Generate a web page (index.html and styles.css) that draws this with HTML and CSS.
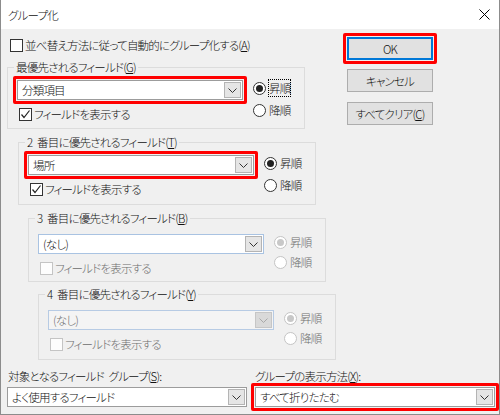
FILE: index.html
```html
<!DOCTYPE html>
<html lang="ja">
<head>
<meta charset="utf-8">
<title>グループ化</title>
<link rel="stylesheet" href="styles.css">
</head>
<body>
<div class="dialog">
  <div class="titlebar">
    <span class="title">グループ化</span>
    <svg class="close" width="11" height="11" viewBox="0 0 11 11"><path d="M0.5 0.5 L10.5 10.5 M10.5 0.5 L0.5 10.5" stroke="#000" stroke-width="1" fill="none"/></svg>
  </div>
  <div class="main">
    <div class="left">
      <div class="check auto"><span class="box"></span><span>並べ替え方法に従って自動的にグループ化する(<u>A</u>)</span></div>

      <fieldset class="group g1">
        <legend>最優先されるフィールド(<u>G</u>)</legend>
        <div class="fbody">
          <div class="hl red"><div class="combo"><span class="val">分類項目</span><span class="btn"><svg width="9" height="5" viewBox="0 0 9 5"><path d="M0.5 0.5 L4.5 4.5 L8.5 0.5" stroke="#333" fill="none"/></svg></span></div></div>
          <div class="radios">
            <div class="radio"><span class="circle on"></span><span class="focus">昇順</span></div>
            <div class="radio"><span class="circle"></span><span>降順</span></div>
          </div>
          <div class="check sub"><span class="box"><svg width="11" height="11" viewBox="0 0 11 11"><path d="M1.5 5.5 L4 8.5 L9.5 1.5" stroke="#222" stroke-width="1.2" fill="none"/></svg></span><span>フィールドを表示する</span></div>
        </div>
      </fieldset>

      <fieldset class="group g2">
        <legend>2 番目に優先されるフィールド(<u>T</u>)</legend>
        <div class="fbody">
          <div class="hl red"><div class="combo"><span class="val">場所</span><span class="btn"><svg width="9" height="5" viewBox="0 0 9 5"><path d="M0.5 0.5 L4.5 4.5 L8.5 0.5" stroke="#333" fill="none"/></svg></span></div></div>
          <div class="radios">
            <div class="radio"><span class="circle on"></span><span>昇順</span></div>
            <div class="radio"><span class="circle"></span><span>降順</span></div>
          </div>
          <div class="check sub"><span class="box"><svg width="11" height="11" viewBox="0 0 11 11"><path d="M1.5 5.5 L4 8.5 L9.5 1.5" stroke="#222" stroke-width="1.2" fill="none"/></svg></span><span>フィールドを表示する</span></div>
        </div>
      </fieldset>

      <fieldset class="group g3">
        <legend>3 番目に優先されるフィールド(<u>B</u>)</legend>
        <div class="fbody">
          <div class="hl"><div class="combo soft"><span class="val">(なし)</span><span class="btn"><svg width="9" height="5" viewBox="0 0 9 5"><path d="M0.5 0.5 L4.5 4.5 L8.5 0.5" stroke="#333" fill="none"/></svg></span></div></div>
          <div class="radios disabled">
            <div class="radio"><span class="circle on"></span><span>昇順</span></div>
            <div class="radio"><span class="circle"></span><span>降順</span></div>
          </div>
          <div class="check sub disabled"><span class="box"></span><span>フィールドを表示する</span></div>
        </div>
      </fieldset>

      <fieldset class="group g4">
        <legend>4 番目に優先されるフィールド(<u>Y</u>)</legend>
        <div class="fbody">
          <div class="hl"><div class="combo off"><span class="val">(なし)</span><span class="btn"><svg width="9" height="5" viewBox="0 0 9 5"><path d="M0.5 0.5 L4.5 4.5 L8.5 0.5" stroke="#a8a8a8" fill="none"/></svg></span></div></div>
          <div class="radios disabled">
            <div class="radio"><span class="circle on"></span><span>昇順</span></div>
            <div class="radio"><span class="circle"></span><span>降順</span></div>
          </div>
          <div class="check sub disabled"><span class="box"></span><span>フィールドを表示する</span></div>
        </div>
      </fieldset>
    </div>

    <div class="buttons">
      <div class="hlbtn"><div class="button default">OK</div></div>
      <div class="button cancel">キャンセル</div>
      <div class="button clear">すべてクリア(<u>C</u>)</div>
    </div>
  </div>

  <div class="bottom">
    <div class="bcol">
      <div class="blabel">対象となるフィールド グループ(<u>S</u>):</div>
      <div class="hl wide"><div class="combo"><span class="val">よく使用するフィールド</span><span class="btn"><svg width="9" height="5" viewBox="0 0 9 5"><path d="M0.5 0.5 L4.5 4.5 L8.5 0.5" stroke="#333" fill="none"/></svg></span></div></div>
    </div>
    <div class="bcol right">
      <div class="blabel">グループの表示方法(<u>X</u>):</div>
      <div class="hl wide red"><div class="combo"><span class="val">すべて折りたたむ</span><span class="btn"><svg width="9" height="5" viewBox="0 0 9 5"><path d="M0.5 0.5 L4.5 4.5 L8.5 0.5" stroke="#333" fill="none"/></svg></span></div></div>
    </div>
  </div>
</div>
</body>
</html>
```

FILE: styles.css
```css
* { box-sizing: border-box; }

body {
  margin: 0;
  font-family: "Noto Sans CJK JP", "Noto Sans", sans-serif;
  font-size: 11.5px;
  font-weight: 300;
  letter-spacing: -0.8px;
  word-spacing: 3px;
  font-feature-settings: "palt";
  color: #111;
  background: #fff;
}

u { text-decoration: underline; text-underline-offset: 1px; }

.dialog {
  width: 500px;
  height: 415px;
  background: #f0f0f0;
  border: 1px solid #8c8c8c;
  border-top: none;
  display: flex;
  flex-direction: column;
}

.titlebar {
  height: 29px;
  flex: none;
  background: #fff;
  display: flex;
  align-items: center;
  justify-content: space-between;
  padding: 0 9px 0 7px;
}

.title { line-height: 16px; }

.main {
  display: flex;
  align-items: flex-start;
}

.left {
  width: 342px;
  padding-top: 8px;
}

/* checkboxes */
.check {
  display: flex;
  align-items: center;
  height: 16px;
  line-height: 16px;
  white-space: nowrap;
}

.check .box {
  width: 13px;
  height: 13px;
  border: 1px solid #333;
  background: #fff;
  margin-right: 2px;
  display: flex;
  align-items: center;
  justify-content: center;
  flex: none;
}

.check.auto { margin-left: 9px; margin-bottom: 6px; }

.check.sub { grid-column: 1; margin-left: 6px; margin-top: 2px; }

.check.disabled { color: #6d6d6d; }
.check.disabled .box { border-color: #c4c4c4; background: #fdfdfd; }

/* group boxes */
.group {
  margin: 0;
  width: 298px;
  border: 1px solid #dcdcdc;
  padding: 1px 5px 6px 5px;
  min-width: 0;
}

.group legend {
  padding: 0 2px;
  margin-left: 1px;
  line-height: 16px;
  white-space: nowrap;
}

.g1 { margin-left: 6px; }
.g2 { margin-left: 17px; margin-top: 5px; padding-bottom: 7px; }
.g3 { margin-left: 27px; margin-top: 5px; padding-top: 4px; padding-bottom: 5px; }
.g4 { margin-left: 37px; margin-top: 4px; padding-top: 4px; padding-bottom: 7px; }

.fbody {
  display: grid;
  grid-template-columns: 234px auto;
  column-gap: 6px;
}

/* highlight frame (red annotation) */
.hl {
  width: 234px;
  border: 3px solid transparent;
  padding: 1px;
  border-radius: 2px;
}
.hl.red { border-color: #ff0000; }
.hl.wide { width: 248px; }

.combo {
  height: 20px;
  background: #fff;
  border: 1px solid #9c9c9c;
  display: flex;
  align-items: center;
}

.combo .val {
  flex: 1;
  padding-left: 4px;
  line-height: 16px;
  white-space: nowrap;
}

.combo .btn {
  width: 17px;
  height: 16px;
  margin-right: 1px;
  background: #e5e5e5;
  border: 1px solid #b4b4b4;
  display: flex;
  align-items: center;
  justify-content: center;
}

.combo.soft { border-color: #a9c3e2; }

.combo.off { background: #f4f4f4; border-color: #b7cbe4; color: #6d6d6d; }
.combo.off .btn { background: #d9d9d9; border-color: #c6c6c6; }

/* radios */
.radios {
  grid-column: 2;
  grid-row: 1 / span 2;
  padding-top: 4px;
  display: flex;
  flex-direction: column;
  gap: 6px;
}

.radio {
  display: flex;
  align-items: center;
  height: 16px;
  line-height: 16px;
}

.radio .circle {
  width: 13px;
  height: 13px;
  border: 1px solid #333;
  border-radius: 50%;
  background: #fff;
  margin-right: 3px;
  display: flex;
  align-items: center;
  justify-content: center;
  flex: none;
}

.radio .circle.on::after {
  content: "";
  width: 7px;
  height: 7px;
  border-radius: 50%;
  background: #222;
}

.radio .focus { outline: 1px dotted #000; outline-offset: 0; }

.radios.disabled { color: #6d6d6d; gap: 4px; }
.radios.disabled .circle { border-color: #c4c4c4; }
.radios.disabled .circle.on::after { background: #c8c8c8; }

/* buttons */
.buttons {
  padding-top: 4px;
  display: flex;
  flex-direction: column;
  align-items: flex-start;
}

.hlbtn {
  border: 3px solid #ff0000;
  border-radius: 2px;
  padding: 1px;
}

.button {
  width: 86px;
  height: 23px;
  background: #e1e1e1;
  border: 1px solid #adadad;
  display: flex;
  align-items: center;
  justify-content: center;
  line-height: 16px;
  white-space: nowrap;
}

.button.default { border: 2px solid #0078d7; }
.button.cancel { margin-left: 4px; margin-top: 5px; }
.button.clear { margin-left: 4px; margin-top: 10px; }

/* bottom row */
.bottom {
  display: flex;
  padding-left: 2px;
  margin-top: 10px;
}

.bcol { width: 248px; }

.blabel {
  line-height: 13px;
  height: 13px;
  padding-left: 5px;
  white-space: nowrap;
}

.bcol.right .blabel { padding-left: 4px; }
```
